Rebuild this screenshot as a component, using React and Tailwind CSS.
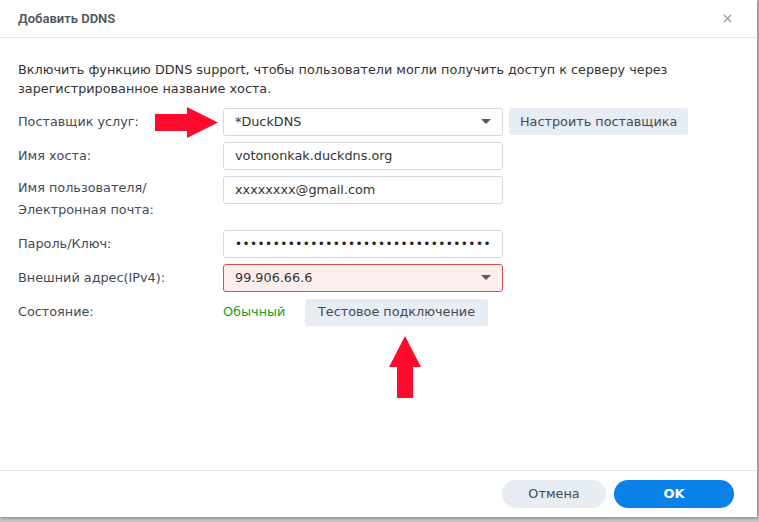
import { X } from 'lucide-react';

const font = { fontFamily: '"DejaVu Sans", Verdana, sans-serif' };

function Caret() {
  return (
    <svg width="10" height="6" viewBox="0 0 10 6" className="shrink-0">
      <path d="M0 0h10L5 5z" fill="#505a64" />
    </svg>
  );
}

function Field({ children, error, select }) {
  return (
    <div
      className={`flex h-[28px] w-[280px] items-center justify-between overflow-hidden rounded-[3px] border px-[11px] text-[12.8px] text-[#333] ${
        error ? 'border-[#e4484c] bg-[#fdeeee]' : 'border-[#d3dae2] bg-white'
      }`}
    >
      <span className="whitespace-nowrap">{children}</span>
      {select && <Caret />}
    </div>
  );
}

function Row({ label, children, tall }) {
  return (
    <div className={`flex ${tall ? 'h-[48px]' : 'h-[28px]'}`}>
      <div className={`w-[205px] shrink-0 text-[12.8px] leading-[22px] text-[#414b55] ${tall ? 'pt-[1px]' : 'flex items-center'}`}>
        {label}
      </div>
      {children}
    </div>
  );
}

export default function App() {
  return (
    <div className="h-[522px] w-[759px] overflow-hidden bg-[#c4c4c4]" style={font}>
      <div className="relative flex h-[517px] w-[757px] flex-col bg-white shadow-[1px_1px_3px_rgba(0,0,0,0.35)]">
        <header className="flex h-[38px] shrink-0 items-center justify-between border-b border-[#e3e7ec] pl-[18px] pr-[23px]">
          <h1 className="text-[13px] font-semibold text-[#4d5560]" style={{ fontFamily: 'Roboto, "Liberation Sans", sans-serif' }}>
            Добавить DDNS
          </h1>
          <X size={13} strokeWidth={2} className="text-[#8a929b]" />
        </header>

        <section className="flex-1 px-[18px] pt-[22px]">
          <p className="text-[12.8px] leading-[19px] text-[#333]">
            Включить функцию DDNS support, чтобы пользователи могли получить доступ к серверу через
            <br />
            зарегистрированное название хоста.
          </p>

          <div className="mt-[10px] flex flex-col gap-[6px]">
            <Row label="Поставщик услуг:">
              <Field select>*DuckDNS</Field>
              <button className="ml-[6px] h-[27px] rounded-[3px] bg-[#e8ecf3] px-[11px] text-[12.8px] text-[#414b55]">
                Настроить поставщика
              </button>
            </Row>
            <Row label="Имя хоста:">
              <Field>votononkak.duckdns.org</Field>
            </Row>
            <Row
              tall
              label={
                <>
                  Имя пользователя/
                  <br />
                  Электронная почта:
                </>
              }
            >
              <Field>xxxxxxxx@gmail.com</Field>
            </Row>
            <Row label="Пароль/Ключ:">
              <Field>
                <span className="text-[12px] tracking-[0.45px] text-[#222]">{'•'.repeat(34)}</span>
              </Field>
            </Row>
            <Row label="Внешний адрес(IPv4):">
              <Field error select>99.906.66.6</Field>
            </Row>
            <Row label="Состояние:">
              <div className="flex items-center">
                <span className="w-[82px] text-[12.8px] text-[#1aa11a]">Обычный</span>
                <button className="h-[27px] rounded-[3px] bg-[#e8ecf3] px-[13px] text-[12.8px] text-[#414b55]">
                  Тестовое подключение
                </button>
              </div>
            </Row>
          </div>
        </section>

        <footer className="flex h-[47px] shrink-0 items-start justify-end gap-[8px] border-t border-[#e3e7ec] pr-[23px] pt-[9px]">
          <button className="h-[28px] w-[104px] rounded-full bg-[#e8ecf3] text-[12.8px] text-[#414b55]">Отмена</button>
          <button className="h-[28px] w-[120px] rounded-full bg-[#0a80e9] text-[13px] font-bold text-white">OK</button>
        </footer>

        {/* annotation arrows */}
        <svg className="absolute left-[155px] top-[107px]" width="64" height="32" viewBox="0 0 64 32">
          <path d="M0 7h32V0l31 15.5L32 31v-7H0z" fill="#fe0a2c" />
        </svg>
        <svg className="absolute left-[389px] top-[336px]" width="32" height="63" viewBox="0 0 32 63">
          <path d="M16 0l16 31h-8v31H8V31H0z" fill="#fe0a2c" />
        </svg>
      </div>
    </div>
  );
}
